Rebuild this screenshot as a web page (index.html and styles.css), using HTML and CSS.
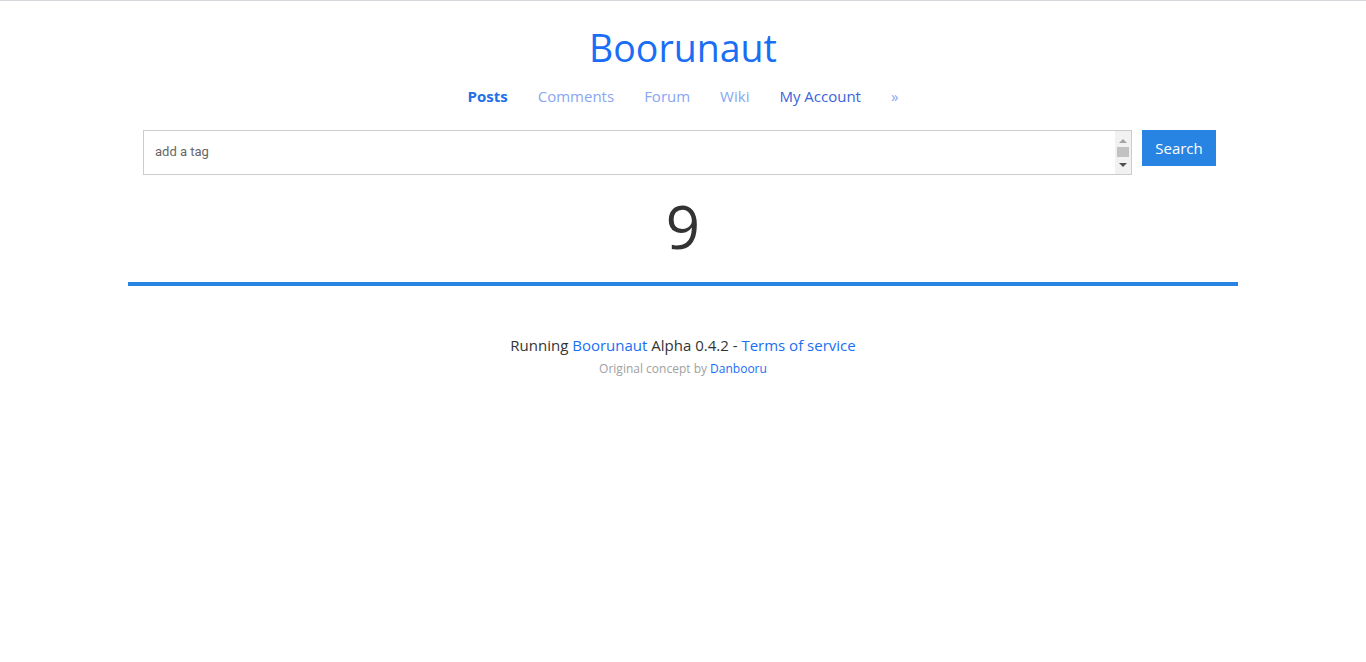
FILE: index.html
```html
<!DOCTYPE html>
<html>
<head>
<meta charset="utf-8">
<title>Boorunaut</title>
<link rel="stylesheet" href="styles.css">
</head>
<body>
<div class="topline"></div>
<header class="header">
  <h1 class="brand"><a href="#">Boorunaut</a></h1>
  <nav class="nav">
    <a href="#" class="nav-link active">Posts</a>
    <a href="#" class="nav-link light">Comments</a>
    <a href="#" class="nav-link light">Forum</a>
    <a href="#" class="nav-link light">Wiki</a>
    <a href="#" class="nav-link dark">My Account</a>
    <a href="#" class="nav-link light">»</a>
  </nav>
</header>
<main class="container">
  <form class="search">
    <div class="search-field">
      <textarea class="search-input" placeholder="add a tag"></textarea>
      <div class="scrollbar" aria-hidden="true">
        <span class="arrow-up"></span>
        <span class="thumb"></span>
        <span class="arrow-down"></span>
      </div>
    </div>
    <button type="button" class="search-btn">Search</button>
  </form>
  <div class="count">9</div>
  <hr class="divider">
</main>
<footer class="footer">
  <p class="footer-main">Running <a href="#">Boorunaut</a> Alpha 0.4.2 - <a href="#">Terms of service</a></p>
  <p class="footer-sub">Original concept by <a href="#">Danbooru</a></p>
</footer>
</body>
</html>
```
FILE: styles.css
```css
* { box-sizing: border-box; }
html, body { margin: 0; padding: 0; background: #fff; }
body {
  font-family: "Open Sans", "Liberation Sans", sans-serif;
  color: #333;
}
a { text-decoration: none; }
.topline { height: 1px; background: #d5d8dc; }
.header { text-align: center; padding-top: 23px; }
.brand {
  margin: 0;
  font-size: 37.5px;
  font-weight: 400;
  line-height: 48px;
}
.brand a { color: #1a6ef5; }
.nav {
  display: flex;
  justify-content: center;
  gap: 30px;
  margin-top: 12px;
  font-size: 15px;
  line-height: 24px;
}
.nav-link.active { color: #2370e6; font-weight: 700; }
.nav-link.light { color: #88a6f2; }
.nav-link.dark { color: #3a63dc; }
.container {
  width: 1110px;
  margin: 0 auto;
}
.search {
  display: flex;
  align-items: flex-start;
  gap: 10px;
  padding: 0 22px 0 15px;
  margin-top: 22px;
}
.search-field {
  flex: 1;
  position: relative;
  height: 45px;
}
.search-input {
  display: block;
  width: 100%;
  height: 45px;
  border: 1px solid #ccc;
  padding: 13px 28px 13px 11px;
  resize: none;
  overflow: hidden;
  font-family: Roboto, "Liberation Sans", sans-serif;
  font-size: 13px;
  color: #555;
  outline: none;
}
.search-input::placeholder { color: #666; }
.scrollbar {
  position: absolute;
  top: 1px;
  right: 1px;
  bottom: 1px;
  width: 16px;
  background: #f1f1f1;
  display: flex;
  flex-direction: column;
  align-items: center;
  padding-top: 8px;
}
.arrow-up {
  width: 0;
  height: 0;
  border-left: 4px solid transparent;
  border-right: 4px solid transparent;
  border-bottom: 4px solid #a3a3a3;
}
.thumb {
  width: 12px;
  height: 10px;
  background: #c1c1c1;
  margin-top: 4px;
}
.arrow-down {
  width: 0;
  height: 0;
  border-left: 4px solid transparent;
  border-right: 4px solid transparent;
  border-top: 4px solid #505050;
  margin-top: 6px;
}
.search-btn {
  width: 74px;
  height: 36px;
  border: 0;
  background: #2884e2;
  color: #fff;
  font-family: "Open Sans", "Liberation Sans", sans-serif;
  font-size: 15px;
  padding: 0;
}
.count {
  text-align: center;
  font-size: 60px;
  line-height: 80px;
  font-weight: 400;
  color: #333;
  margin-top: 11px;
}
.divider {
  border: 0;
  height: 4px;
  background: #2884e2;
  margin: 16px 0 0;
}
.footer { text-align: center; margin-top: 48px; }
.footer p { margin: 0; }
.footer a { color: #1a6ef5; }
.footer-main { font-size: 15px; line-height: 22px; color: #333; }
.footer-sub { font-size: 12px; line-height: 18px; color: #a0a0a0; margin-top: 0; }
.footer .footer-sub { margin-top: 4px; }
```
